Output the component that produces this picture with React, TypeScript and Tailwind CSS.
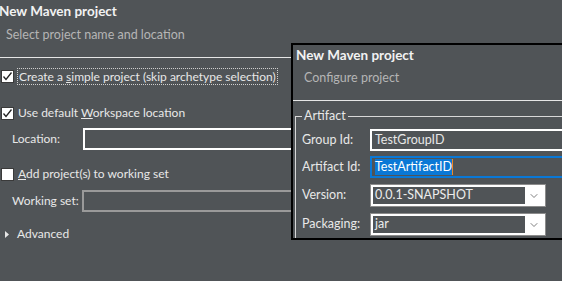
import { ChevronDown } from "lucide-react";

function CheckBox({ checked }: { checked: boolean }) {
  return (
    <span className="w-[13px] h-[13px] bg-white border border-[#3a3a3a] flex items-center justify-center shrink-0">
      {checked && (
        <svg width="11" height="11" viewBox="0 0 11 11">
          <path d="M1.5 5.5 L4 8.5 L9.5 1.5" fill="none" stroke="#222" strokeWidth="1.3" />
        </svg>
      )}
    </span>
  );
}

function Combo({ value }: { value: string }) {
  return (
    <div className="w-[176px] h-[23px] border border-[#8c8c8c] bg-white flex p-[2px]">
      <div className="flex-1 bg-[#505457] text-[#ececec] pl-[2px] flex items-center">{value}</div>
      <div className="w-[18px] flex items-center justify-center">
        <ChevronDown size={12} strokeWidth={1.5} className="text-[#555]" />
      </div>
    </div>
  );
}

function FieldRow({ label, children, className }: { label: string; children: React.ReactNode; className: string }) {
  return (
    <div className={`flex items-center ${className}`}>
      <span className="w-[74px] pl-[6px] shrink-0 whitespace-nowrap">{label}</span>
      {children}
    </div>
  );
}

export default function App() {
  return (
    <div
      className="relative w-[562px] h-[281px] overflow-hidden bg-[#505457] text-[12px] text-[#e8e8e8] whitespace-nowrap"
      style={{ fontFamily: 'Lato, "Noto Sans", sans-serif' }}
    >
      {/* main wizard page */}
      <div className="h-[22px] flex items-center -ml-[1px] font-bold text-[13.5px] text-[#f2f2f2]">New Maven project</div>
      <div className="h-[22px] mt-[2px] flex items-center pl-[6px] text-[#b5b5b5] text-[12.5px]">Select project name and location</div>
      <div className="mt-[11px] h-px bg-[#e6e6e6]" />
      <div className="h-[18px] mt-[9px] flex items-center pl-[1px] gap-[3px]">
        <CheckBox checked />
        <span className="border border-dotted border-[#cfcfcf] px-px leading-[15px]">
          Create a <span className="underline">s</span>imple project (skip archetype selection)
        </span>
      </div>
      <div className="h-[18px] mt-[19px] flex items-center pl-[1px] gap-[4px]">
        <CheckBox checked />
        <span>
          Use default <span className="underline">W</span>orkspace location
        </span>
      </div>
      <div className="h-[22px] mt-[6px] flex items-center">
        <span className="w-[83px] pl-[12px] shrink-0">Location:</span>
        <div className="flex-1 h-[22px] border-2 border-white" />
      </div>
      <div className="h-[18px] mt-[15px] flex items-center pl-[1px] gap-[4px]">
        <CheckBox checked={false} />
        <span>
          <span className="underline">A</span>dd project(s) to working set
        </span>
      </div>
      <div className="h-[22px] mt-[7px] flex items-center">
        <span className="w-[82px] pl-[12px] shrink-0">Working set:</span>
        <div className="flex-1 h-[22px] border-2 border-[#9a9a9a]" />
      </div>
      <div className="h-[18px] mt-[13px] flex items-center gap-[8px] pl-[5px]">
        <svg width="4" height="7" viewBox="0 0 4 7">
          <path d="M0 0 L4 3.5 L0 7 Z" fill="#e6e6e6" />
        </svg>
        <span>Advanced</span>
      </div>

      {/* second wizard window on top */}
      <div className="absolute left-[291px] top-[43px] w-[300px] h-[197px] overflow-hidden bg-[#505457] border-l-2 border-t-2 border-b-2 border-black text-[12.5px]">
        <div className="h-[20px] flex items-center pl-[3px] font-bold text-[13.5px] text-[#f2f2f2]">New Maven project</div>
        <div className="h-[22px] mt-[2px] flex items-center pl-[11px] text-[#b5b5b5]">Configure project</div>
        <div className="mt-[11px] h-px bg-[#e6e6e6]" />
        <div className="mt-[15px] ml-[2px] h-[200px] border-l border-t border-[#d8d8d8] relative">
          <span className="absolute -top-[9px] left-[6px] px-[2px] bg-[#505457] leading-[16px]">Artifact</span>
          <FieldRow label="Group Id:" className="mt-[12px]">
            <div className="flex-1 h-[22px] border-2 border-white flex items-center pl-[3px]">TestGroupID</div>
          </FieldRow>
          <FieldRow label="Artifact Id:" className="mt-[5px]">
            <div className="flex-1 h-[22px] border-2 border-[#0a78d6] flex items-center pl-[3px]">
              <span className="bg-[#0a78d6] text-white leading-[16px]">TestArtifactID</span>
              <span className="w-px h-[16px] bg-[#f08a24]" />
            </div>
          </FieldRow>
          <FieldRow label="Version:" className="mt-[6px]">
            <Combo value="0.0.1-SNAPSHOT" />
          </FieldRow>
          <FieldRow label="Packaging:" className="mt-[6px]">
            <Combo value="jar" />
          </FieldRow>
        </div>
      </div>
    </div>
  );
}
